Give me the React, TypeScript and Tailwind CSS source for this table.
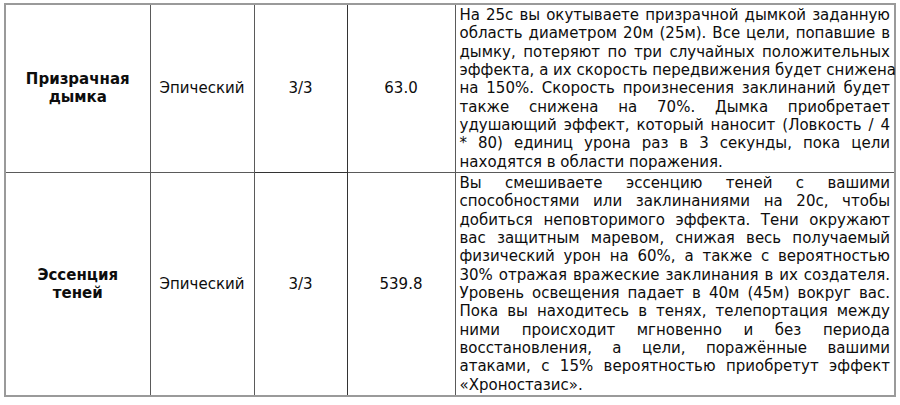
const rows = [
  {
    name: ['Призрачная', 'дымка'],
    rarity: 'Эпический',
    rank: '3/3',
    value: '63.0',
    lines: [
      'На 25с вы окутываете призрачной дымкой заданную',
      'область диаметром 20м (25м). Все цели, попавшие в',
      'дымку, потеряют по три случайных положительных',
      'эффекта, а их скорость передвижения будет снижена',
      'на 150%. Скорость произнесения заклинаний будет',
      'также снижена на 70%. Дымка приобретает',
      'удушающий эффект, который наносит (Ловкость / 4',
      '* 80) единиц урона раз в 3 секунды, пока цели',
      'находятся в области поражения.',
    ],
  },
  {
    name: ['Эссенция', 'теней'],
    rarity: 'Эпический',
    rank: '3/3',
    value: '539.8',
    lines: [
      'Вы смешиваете эссенцию теней с вашими',
      'способностями или заклинаниями на 20с, чтобы',
      'добиться неповторимого эффекта. Тени окружают',
      'вас защитным маревом, снижая весь получаемый',
      'физический урон на 60%, а также с вероятностью',
      '30% отражая вражеские заклинания в их создателя.',
      'Уровень освещения падает в 40м (45м) вокруг вас.',
      'Пока вы находитесь в тенях, телепортация между',
      'ними происходит мгновенно и без периода',
      'восстановления, а цели, поражённые вашими',
      'атаками, с 15% вероятностью приобретут эффект',
      '«Хроностазис».',
    ],
  },
];

export default function App() {
  return (
    <div className="min-h-screen bg-white pl-[4px] pt-[3px] font-['DejaVu_Sans',Verdana,sans-serif] text-[15px] text-[#0d0d0d]">
      <table className="w-[892px] table-fixed border-collapse border-2 border-[#9a9a9a]">
        <colgroup>
          <col className="w-[145px]" />
          <col className="w-[104px]" />
          <col className="w-[93px]" />
          <col className="w-[108px]" />
          <col />
        </colgroup>
        <tbody>
          {rows.map((r) => (
            <tr key={r.value}>
              <td className="border border-[#5a5a5a] text-center align-middle font-bold leading-[18px]">
                {r.name.map((n) => (
                  <div key={n}>{n}</div>
                ))}
              </td>
              <td className="border border-[#5a5a5a] text-center align-middle">{r.rarity}</td>
              <td className="border border-[#333] text-center align-middle">{r.rank}</td>
              <td className="border border-[#5a5a5a] text-center align-middle">{r.value}</td>
              <td className="border border-[#5a5a5a] px-[4px] py-[1px] align-top leading-[18.33px]">
                {r.lines.map((l, i) => (
                  <div
                    key={i}
                    className={
                      i === r.lines.length - 1
                        ? 'whitespace-nowrap text-left'
                        : 'whitespace-nowrap text-justify [text-align-last:justify]'
                    }
                  >
                    {l}
                  </div>
                ))}
              </td>
            </tr>
          ))}
        </tbody>
      </table>
    </div>
  );
}
